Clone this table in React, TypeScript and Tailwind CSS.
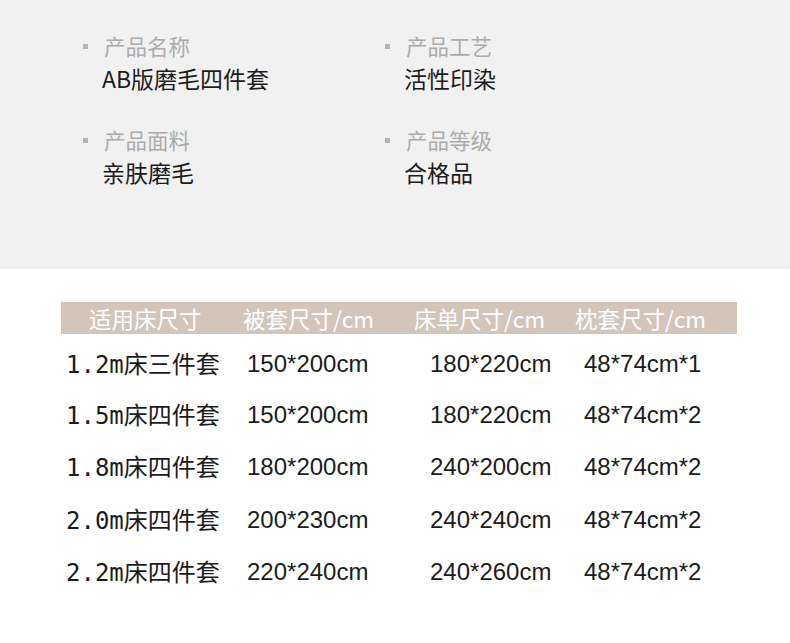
const specs = [
  { label: "产品名称", value: "AB版磨毛四件套" },
  { label: "产品工艺", value: "活性印染" },
  { label: "产品面料", value: "亲肤磨毛" },
  { label: "产品等级", value: "合格品" },
];

const rows = [
  { size: "1.2m", name: "床三件套", quilt: "150*200cm", sheet: "180*220cm", pillow: "48*74cm*1", h: "h-[48px]" },
  { size: "1.5m", name: "床四件套", quilt: "150*200cm", sheet: "180*220cm", pillow: "48*74cm*2", h: "h-[53px]" },
  { size: "1.8m", name: "床四件套", quilt: "180*200cm", sheet: "240*200cm", pillow: "48*74cm*2", h: "h-[52px]" },
  { size: "2.0m", name: "床四件套", quilt: "200*230cm", sheet: "240*240cm", pillow: "48*74cm*2", h: "h-[53px]" },
  { size: "2.2m", name: "床四件套", quilt: "220*240cm", sheet: "240*260cm", pillow: "48*74cm*2", h: "h-[52px]" },
];

const cjk = "font-['Noto_Sans_CJK_SC',sans-serif]";
const num = "font-['Liberation_Sans','Noto_Sans_CJK_SC',sans-serif]";

export default function App() {
  return (
    <div className="w-[790px] h-[643px] bg-white overflow-hidden">
      {/* product info */}
      <section className="h-[269px] bg-[#f1f1f1] pl-[83px] pt-[31px]">
        <div className="grid grid-cols-[302px_302px] gap-y-[32px]">
          {specs.map((s) => (
            <div key={s.label}>
              <div className="flex items-center gap-[16px] h-[30px]">
                <span className="w-[5px] h-[5px] bg-[#b4b4b4]" />
                <span className={`${cjk} text-[21.5px] text-[#ababab] leading-none`}>{s.label}</span>
              </div>
              <div className={`${cjk} text-[23px] text-[#1c1c1c] leading-none pl-[19px] mt-[2px] h-[30px] flex items-center`}>
                {s.value}
              </div>
            </div>
          ))}
        </div>
      </section>

      {/* size table */}
      <section className="pt-[33px] pl-[61px] pr-[53px]">
        <div className="grid grid-cols-[182px_171px_161px_1fr] h-[32px] items-center bg-[#d4c5bb] text-white text-[22.5px] leading-none">
          <span className={`${cjk} pl-[28px]`}>适用床尺寸</span>
          <span className={cjk}>被套尺寸/cm</span>
          <span className={cjk}>床单尺寸/cm</span>
          <span className={cjk}>枕套尺寸/cm</span>
        </div>
        <div className="pt-[6px] text-[#1c1c1c]">
          {rows.map((r) => (
            <div key={r.size} className={`grid grid-cols-[182px_171px_161px_1fr] items-center ${r.h}`}>
              <span className="pl-[5px] text-[24px] leading-none whitespace-nowrap">
                <span className="font-['DejaVu_Sans_Mono',monospace] text-[24px]">{r.size}</span>
                <span className={cjk}>{r.name}</span>
              </span>
              <span className={`${num} pl-[4px] text-[24px] leading-none`}>{r.quilt}</span>
              <span className={`${num} pl-[16px] text-[24px] leading-none`}>{r.sheet}</span>
              <span className={`${num} pl-[9px] text-[24px] leading-none`}>{r.pillow}</span>
            </div>
          ))}
        </div>
      </section>
    </div>
  );
}
